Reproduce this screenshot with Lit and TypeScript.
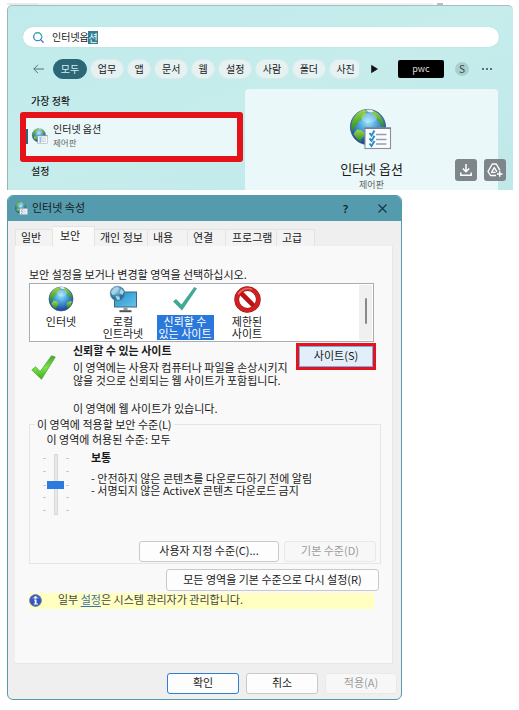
import { LitElement, html, css, svg } from "lit";
import { customElement, property } from "lit/decorators.js";
import { classMap } from "lit/directives/class-map.js";

const base = css`
  * { box-sizing: border-box; }
  :host { font-family: "Noto Sans CJK KR", "Noto Sans", sans-serif; color: #1a1a1a; }
  svg { display: block; flex: none; overflow: visible; }
`;

const globe = svg`
  <defs>
    <radialGradient id="sea" cx=".5" cy=".35" r=".7">
      <stop offset="0" stop-color="#9be6fa"/><stop offset=".4" stop-color="#4a9fdc"/>
      <stop offset=".8" stop-color="#2353a8"/><stop offset="1" stop-color="#26397f"/>
    </radialGradient>
    <linearGradient id="land" x1="0" y1="0" x2="0" y2="1">
      <stop offset="0" stop-color="#9bd84a"/><stop offset="1" stop-color="#258a22"/>
    </linearGradient>
  </defs>
  <circle cx="18" cy="19" r="17.6" fill="url(#sea)" stroke="#394c78" stroke-width=".8"/>
  <g fill="url(#land)">
    <path d="M1.8 15C4 7 9 2.5 15 1.8l2 1.4-2 1.3 2 2-4 2.4-1 3-3.5 1.2L8 16.5l-3 1.8-1 3.5-2.4 1.4Q.8 18 1.8 15Z"/>
    <path d="M7 21.5l4 .5 3.5 3-1 4-2.5 2 .5 3Q6 31 3.5 26Z"/>
    <path d="M20 2.2l5 1.4 4.500 3.200 3.500 6 1 6-3-1-1.500-4-2.500-1-1-4-3-2Z"/>
    <path d="M27 24l5-2 2 1-1.800 5-4.200 4-2-3Z"/>
  </g>
  <path d="M16 1.600l5-.2 3 1.800-3 1.300-3-.6Z" fill="#fff" opacity=".8"/>
  <ellipse cx="19" cy="10" rx="8" ry="5" fill="#fff" opacity=".22"/>`;

@customElement("globe-icon")
export class GlobeIcon extends LitElement {
  @property() kind = "plain";
  static styles = [base, css`
    :host { display: block; width: 26px; height: 26px; flex: none; }
    :host([kind="list"]) { width: 42px; height: 42px; }
    :host([kind="small"]) { width: 16px; height: 16px; }
    :host([kind="title"]) { width: 13px; height: 13px; }
    svg { width: 100%; height: 100%; }
  `];
  render() {
    const sheet = this.kind !== "plain";
    return html`<svg viewBox=${sheet ? "0 0 42 42" : "0 0 36 38"}>
      ${globe}
      ${sheet ? svg`
        <rect x="15" y="20" width="25.500" height="20.500" fill="#fbfcff" stroke="#8b8f9b" stroke-width="1.100"/>
        <path d="M14.500 20.300h26.500" stroke="#787e8c" stroke-width="1.600"/>
        <path d="M26 26.500h10.500M26 31.500h10.500M26 36h10.500" stroke="#9a9cb0" stroke-width="1.300"/>
        <path d="M19.500 25l2 2.500 3-5M19.500 30.300l2 2.500 3-5M19.500 35.500l2 2.500 3-5" fill="none" stroke="#258ec9" stroke-width="1.900"/>` : ""}
    </svg>`;
  }
}

@customElement("search-panel")
export class SearchPanel extends LitElement {
  static styles = [base, css`
    :host { display: block; width: 506px; height: 187px; font-size: 10px; line-height: 14px; }
    .behind { height: 2px; display: flex; background: #fff; }
    .behind i { background: #e9e9e9; width: 31px; }
    .behind i.b { background: #f2f2f2; width: 395px; }
    .behind i.c { background: #bdbdbd; width: 6px; margin-left: 4px; }
    .panel { height: 185px; border-top: 1px solid #a9bdbd; border-left: 1px solid #a0b4b4; border-radius: 5px 5px 0 0;
      background: linear-gradient(160deg, #c0eaeb, #c6edec 50%, #c0e8e9); overflow: hidden; position: relative; }
    .search { margin: 21px 14px 0 15px; height: 20px; border-radius: 10px; background: #fff; display: flex; align-items: center; padding-left: 10px; box-shadow: 0 0 1px #9fc8c9; }
    .query { margin-left: 8px; display: flex; align-items: center; }
    .sel { background: #327f91; color: #fff; height: 13px; line-height: 13px; margin-left: -.6px; padding: 0 .3px; }
    .row { margin: 11px 0 0 25px; height: 22px; display: flex; align-items: center; }
    .chips { display: flex; gap: 3.300px; margin-left: 9px; width: 306px; overflow: hidden; flex: none; height: 22px; align-items: center; }
    .chip { flex: none; border-radius: 11px; background: #e6f1f2; height: 20.500px; width: 33.500px; text-align: center; border: 1px solid #d9eaea; line-height: 18px; }
    .chip.one { width: 24px; }
    .chip.on { background: #2b6777; border-color: #2b6777; color: #d8eef0; width: 34px; }
    .play { margin-left: 12px; }
    .brand { margin-left: 20px; width: 46px; height: 18px; border-radius: 2px; background: #000; color: #ddd; text-align: center; line-height: 17px; font-size: 9px; }
    .who { margin-left: 11px; width: 14px; height: 14px; border-radius: 50%; background: #aacfcf; text-align: center; line-height: 14px; color: #344; }
    .more { margin-left: 13px; }
    .body { display: flex; margin-top: 9px; }
    .left { width: 237px; flex: none; padding: 5px 0 0 12px; }
    .head { font-weight: 500; padding-left: 11px; height: 14px; }
    .hit { margin-top: 4px; width: 223px; height: 50px; border: 6px solid #e5121a; border-radius: 3px; background: #ebf8f9; display: flex; align-items: center; }
    .bar { width: 2px; height: 15px; background: #2b6777; margin-bottom: 2px; }
    .hit globe-icon { margin: -2px 5px 0 4px; }
    .sub { font-size: 8.500px; line-height: 12px; color: #666; }
    .hit .name { line-height: 14px; margin-top: -4px; }
    .left .next { margin-top: 2px; }
    .card { width: 253px; height: 104px; border-radius: 4px 4px 0 0; background: #ebf8f9; display: flex; flex-direction: column; align-items: center; padding: 19px 0 0 0; }
    .card globe-icon { margin-right: 1px; }
    .big { font-size: 13px; line-height: 18px; margin-top: 10px; }
    .card .sub { font-size: 9px; line-height: 13px; }
    .tools { position: absolute; left: 447px; top: 153px; display: flex; gap: 7px; }
    .tool { width: 22px; height: 22px; border-radius: 3px; background: #7f868b; display: grid; place-items: center; }
  `];
  render() {
    const chips = ["모두", "업무", "앱", "문서", "웹", "설정", "사람", "폴더", "사진"];
    return html`
      <div class="behind"><i></i><i class="b"></i><i class="c"></i></div>
      <div class="panel">
        <div class="search">
          <svg width="11" height="11" viewBox="0 0 11 11" fill="none" stroke-width="1.3" stroke-linecap="round">
            <circle cx="4.700" cy="4.700" r="4" stroke="#3584d6"/><path d="M2.500 1.400A4 4 0 0 1 8.700 5" stroke="#49bca5"/><path d="M7.600 7.600l2.600 2.700" stroke="#3576dc"/>
          </svg>
          <div class="query">인터넷옵<span class="sel">션</span></div>
        </div>
        <div class="row">
          <svg width="11" height="10" viewBox="0 0 11 10" fill="none" stroke="#557174" stroke-width="1"><path d="M11 5H.8M5 .8L.8 5 5 9.200"/></svg>
          <div class="chips">${chips.map((c, i) => html`<div class=${classMap({ chip: true, on: i === 0, one: c.length === 1 })}>${c}</div>`)}</div>
          <svg class="play" width="7" height="8" viewBox="0 0 7 8"><path d="M.5.3L6.500 4 .5 7.700Z" fill="#111" stroke="#111" stroke-width=".6" stroke-linejoin="round"/></svg>
          <div class="brand">pwc</div>
          <div class="who">S</div>
          <svg class="more" width="10" height="2" viewBox="0 0 10 2" fill="#333"><circle cx="1" cy="1" r=".9"/><circle cx="5" cy="1" r=".9"/><circle cx="9" cy="1" r=".9"/></svg>
        </div>
        <div class="body">
          <div class="left">
            <div class="head">가장 정확</div>
            <div class="hit"><div class="bar"></div><globe-icon kind="small"></globe-icon>
              <div><div class="name">인터넷 옵션</div><div class="sub">제어판</div></div></div>
            <div class="head next">설정</div>
          </div>
          <div class="card"><globe-icon kind="list"></globe-icon><div class="big">인터넷 옵션</div><div class="sub">제어판</div></div>
        </div>
        <div class="tools">
          <div class="tool"><svg width="12" height="12" viewBox="0 0 12 12" fill="none" stroke="#fff" stroke-width="1.5"><path d="M6 0v7.500M2.800 4.500L6 7.700l3.200-3.200M.8 8.500v2.700h10.400V8.500"/></svg></div>
          <div class="tool"><svg width="16" height="14" viewBox="0 0 16 14" fill="none" stroke="#fff" stroke-width="1.4" stroke-linejoin="round"><path d="M9 12.500H3.500L1 8.500 5.300 1h4L13 7.300"/><path d="M8.500 9.400H4.600L7.300 4.500l2.600 4.400"/><path d="M12.700 8.200v5.600M9.900 11h5.600"/></svg></div>
        </div>
      </div>`;
  }
}

@customElement("options-dialog")
export class OptionsDialog extends LitElement {
  static styles = [base, css`
    :host { display: block; width: 395px; height: 505px; margin-top: 5px; font-size: 11px; line-height: 12.500px; white-space: nowrap; }
    .win { height: 505px; border: 1px solid #559bac; border-radius: 6px; background: #efefef; overflow: hidden; }
    .title { height: 25px; background: #559bae; display: flex; align-items: center; padding: 0 14px 0 7px; }
    .title span { margin: -2px 0 0 4px; flex: 1; }
    .title b { font: 600 11px "Noto Sans", sans-serif; margin-right: 30px; }
    .tabs { display: flex; height: 24px; align-items: flex-end; margin: 1px 0 0 7px; }
    .tab { height: 17px; background: #f3f3f3; border: 1px solid #e4e4e4; border-bottom: 0; border-left: 0; padding-left: 5px; line-height: 14px; }
    .tab.on { height: 20px; background: #f9f9f9; padding-left: 7px; line-height: 16px; }
    .t0 { width: 38px; border-left: 1px solid #e4e4e4; } .t1 { width: 42px; } .t2 { width: 53px; } .t3 { width: 40px; }
    .t4 { width: 38px; } .t5 { width: 51px; padding-left: 6px; } .t6 { width: 38px; }
    .page { margin: 0 8px 0 7px; height: 418px; background: #f9f9f9; border-right: 1px solid #e6e6e6; border-bottom: 1px solid #e6e6e6; padding: 22px 12px 0 13px; }
    .page > * { margin-left: 1px; }
    .list { margin-top: 2px; width: 345px; height: 59px; border: 1px solid #a8adb3; background: #fff; display: flex; }
    .zone { width: 62px; text-align: center; padding-top: 2px; display: flex; flex-direction: column; align-items: center; flex: none; }
    .pic { height: 29px; display: grid; justify-items: center; align-items: start; }
    .zone .lbl { padding: 0 1px; line-height: 12.500px; }
    .zone.on .lbl { background: #2b78dc; color: #fff; width: 57px; }
    .scroll { margin: 1px 1px 1px auto; width: 13px; background: #f0f0f0; display: grid; place-items: center; padding: 0 0 3px 0; }
    .scroll i { width: 2px; height: 26px; background: #898989; border-radius: 1px; }
    .about { display: flex; height: 82px; }
    .about .tick { width: 44px; padding: 13px 0 0 2px; flex: none; }
    .txt { padding-top: 2px; flex: 1; }
    b { font-weight: 700; }
    .txt p { margin: 0; }
    .txt .p1 { margin-top: 5px; } .txt .p2 { margin-top: 16px; }
    .sites { flex: none; width: 80px; height: 27px; margin: 1px 4px 0 -30px; border: 3px solid #e5121f; box-shadow: inset 0 0 0 1px #79aede; background: #e2eef9; text-align: center; line-height: 18px; }
    fieldset { margin: -6px 0 0 1px; padding: 0; width: 352px; height: 146px; border: 1px solid #e5e5e5; min-width: 0; }
    legend { margin-left: 5px; padding: 0 2px; height: 13px; line-height: 12px; }
    .allow { margin: 2px 0 0 16.500px; }
    .level { display: flex; height: 88px; padding: 6px 0 0 13px; }
    .level svg { margin-top: 2px; }
    .note { margin-left: 21px; }
    .note p { margin: 0; } .note p.first { margin-top: 8px; }
    .btns { display: flex; gap: 5px; margin: 8px 0 0 109px; }
    .btn { height: 21px; border: 1px solid #c9c9c9; border-radius: 3px; background: #fdfdfd; text-align: center; line-height: 17px; }
    .off { border-color: #e9e9e9; background: #f7f7f7; color: #9c9c9c; }
    .w140 { width: 140px; } .w92 { width: 92px; }
    .reset { width: 213px; height: 22px; line-height: 18px; margin: 5px 0 0 138px; }
    .info { width: 345px; height: 16px; margin-top: 2px; background: #ffffc1; display: flex; align-items: center; color: #444; }
    .info span { margin: -3px 0 0 16px; } .info u { color: #3c71ad; text-underline-offset: 2px; }
    .foot { display: flex; gap: 7px; margin: 9px 0 0 159px; }
    .foot .btn { width: 72px; } .foot .ok { border-color: #2f7fd3; }
  `];

  zone(i: number) {
    switch (i) {
      case 0: return html`<globe-icon></globe-icon>`;
      case 1: return html`<svg width="27" height="27" viewBox="0 0 27 27">
        <defs><linearGradient id="scr" x1="0" y1="0" x2="1" y2="1"><stop offset="0" stop-color="#2590c8"/><stop offset="1" stop-color="#65c4ee"/></linearGradient>
        <radialGradient id="g" cx=".4" cy=".3"><stop offset="0" stop-color="#a9dcf2"/><stop offset="1" stop-color="#2c719d"/></radialGradient></defs>
        <rect x="4.500" y="6" width="22" height="15" fill="url(#scr)" stroke="#3b6780"/>
        <path d="M13.500 21.500h4v2.500h-4z" fill="#999"/><path d="M9.500 25.200h12" stroke="#4b5559" stroke-width="2"/>
        <circle cx="7.500" cy="7.500" r="7.300" fill="url(#g)" stroke="#5586a3" stroke-width=".6"/>
        <path d="M1 6l3-4 4-1 1.500 2-3 1.500L5 8 2.500 9ZM11 2.500l3 3-1.500 3.500-3-2ZM5.500 10l4 .5.5 3-3 .5Z" fill="#a9d3e6"/></svg>`;
      case 2: return html`<svg width="26" height="25" viewBox="0 0 26 25"><path d="M1 15.500L4 13l5.500 5.500L22.300 1 25 2.500 10 24.500Z" fill="#42a995"/></svg>`;
      default: return html`<svg width="27" height="27" viewBox="0 0 27 27">
        <circle cx="13.500" cy="13.500" r="10.800" fill="#fff" stroke="#97161a" stroke-width="4.800"/><path d="M6 6l15 15" stroke="#bd1216" stroke-width="4.600"/>
        <circle cx="13.500" cy="13.500" r="10.800" fill="none" stroke="#cf2023" stroke-width="3.800"/><path d="M4.200 8.500A10.600 10.600 0 0 1 18 3.500" fill="none" stroke="#e66b69" stroke-width="1.500"/></svg>`;
    }
  }

  render() {
    const tabs = ["일반", "보안", "개인 정보", "내용", "연결", "프로그램", "고급"];
    const zones = [["인터넷"], ["로컬", "인트라넷"], ["신뢰할 수", "있는 사이트"], ["제한된", "사이트"]];
    return html`<div class="win">
      <div class="title"><globe-icon kind="title"></globe-icon><span>인터넷 속성</span><b>?</b>
        <svg width="9" height="9" viewBox="0 0 9 9" stroke="#17333c" stroke-width="1.100"><path d="M.5.5l8 8M8.500.5l-8 8"/></svg></div>
      <div class="tabs">${tabs.map((t, i) => html`<div class="tab t${i} ${i === 1 ? "on" : ""}">${t}</div>`)}</div>
      <div class="page">
        <div>보안 설정을 보거나 변경할 영역을 선택하십시오.</div>
        <div class="list">
          ${zones.map((z, i) => html`<div class="zone ${i === 2 ? "on" : ""}"><div class="pic">${this.zone(i)}</div>
            <div class="lbl">${z.map(l => html`<div>${l}</div>`)}</div></div>`)}
          <div class="scroll"><i></i></div>
        </div>
        <div class="about">
          <div class="tick"><svg width="25" height="25" viewBox="0 0 25 25">
            <defs><linearGradient id="ok" x1="0" y1="0" x2="0" y2="1"><stop offset="0" stop-color="#3fa52d"/><stop offset=".5" stop-color="#7be34a"/><stop offset="1" stop-color="#3aae23"/></linearGradient></defs>
            <path d="M.8 15L4.500 11.800l4.700 4.700L20.500.8 24.300 2 10.500 24.300Z" fill="url(#ok)" stroke="#51ad35" stroke-width=".8"/></svg></div>
          <div class="txt"><b>신뢰할 수 있는 사이트</b>
            <p class="p1">이 영역에는 사용자 컴퓨터나 파일을 손상시키지</p><p>않을 것으로 신뢰되는 웹 사이트가 포함됩니다.</p>
            <p class="p2">이 영역에 웹 사이트가 있습니다.</p></div>
          <div class="sites">사이트(S)</div>
        </div>
        <fieldset><legend>이 영역에 적용할 보안 수준(L)</legend>
          <div class="allow">이 영역에 허용된 수준: 모두</div>
          <div class="level">
            <svg width="27" height="66" viewBox="0 0 27 66">
              <rect x="11.500" y="1.500" width="3" height="60" fill="#e9e9e9" stroke="#d9d9d9"/>
              ${[5.5, 18.5, 32.5, 44.5, 57.5].map(y => svg`<path d="M0 ${y}h3M23 ${y}h3" stroke="#c9c9c9"/>`)}
              <rect x="4" y="28" width="17" height="8" fill="#2d7be0"/></svg>
            <div class="note"><b>보통</b><p class="first">- 안전하지 않은 콘텐츠를 다운로드하기 전에 알림</p><p>- 서명되지 않은 ActiveX 콘텐츠 다운로드 금지</p></div>
          </div>
          <div class="btns"><div class="btn w140">사용자 지정 수준(C)...</div><div class="btn off w92">기본 수준(D)</div></div>
        </fieldset>
        <div class="btn reset">모든 영역을 기본 수준으로 다시 설정(R)</div>
        <div class="info"><svg width="13" height="13" viewBox="0 0 13 13"><circle cx="6.500" cy="6.500" r="5.900" fill="#3456b8" stroke="#7684b5"/><path d="M2.500 4.500a4.500 3.500 0 0 1 8 0Z" fill="#7d9be0"/>
          <circle cx="6.500" cy="3.500" r="1.200" fill="#fff"/><path d="M5 5.500h2.500v4H9v1H4.800v-1h1v-3H5Z" fill="#fff"/></svg>
          <span>일부 <u>설정</u>은 시스템 관리자가 관리합니다.</span></div>
      </div>
      <div class="foot"><div class="btn ok">확인</div><div class="btn">취소</div><div class="btn off">적용(A)</div></div>
    </div>`;
  }
}

@customElement("app-root")
export class AppRoot extends LitElement {
  static styles = css`:host { display: block; width: 519px; height: 710px; background: #fff; padding: 3px 0 0 7px; box-sizing: border-box; overflow: hidden; }`;
  render() { return html`<search-panel></search-panel><options-dialog></options-dialog>`; }
}
